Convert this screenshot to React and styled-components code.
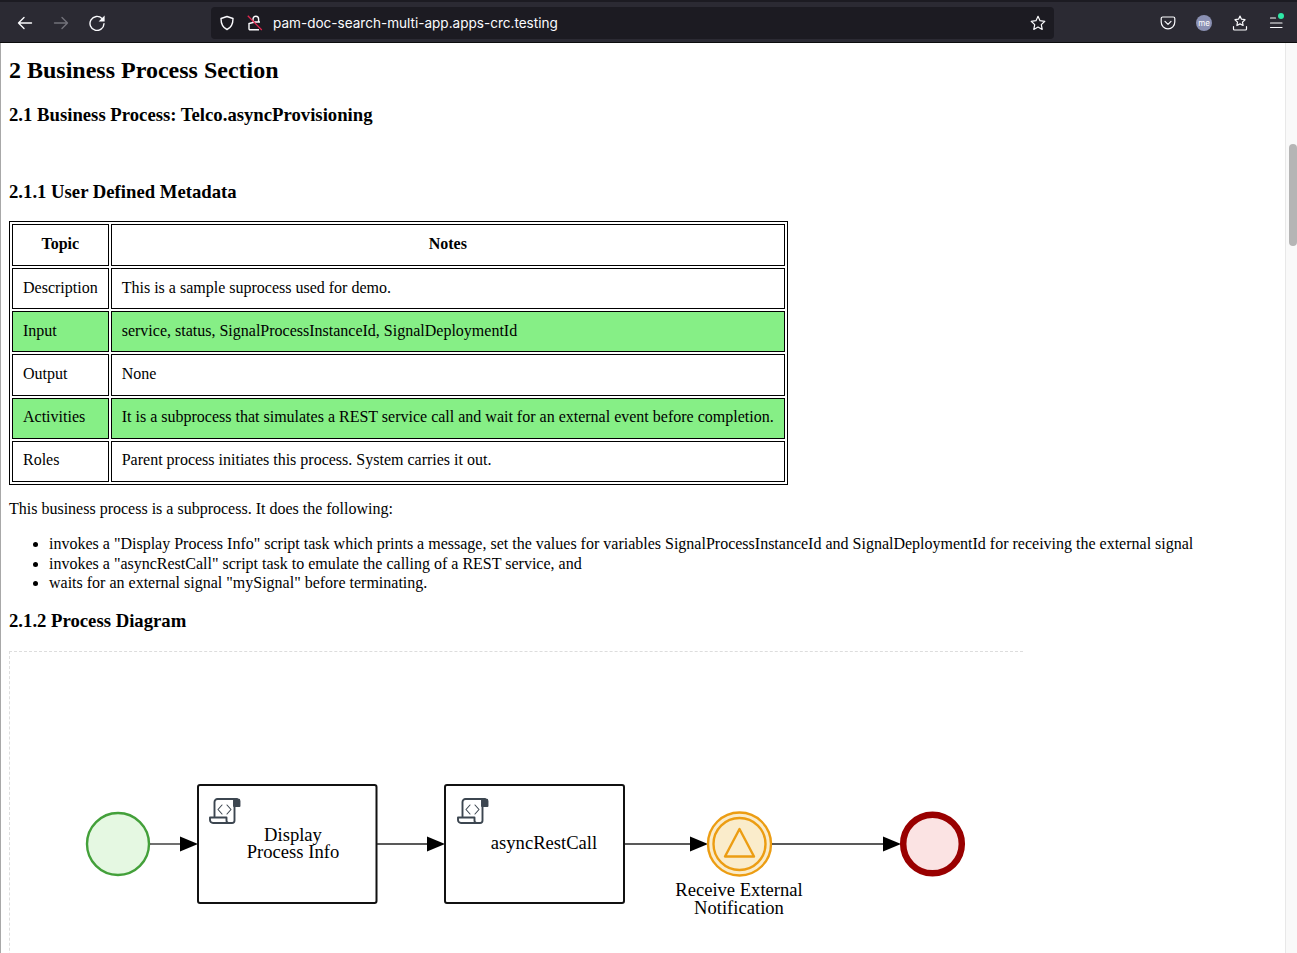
import React from "react";
import styled, { createGlobalStyle } from "styled-components";

const Global = createGlobalStyle`
  html, body { margin: 0; padding: 0; height: 953px; overflow: hidden; background: #fff; }
  #root { height: 953px; }
`;

const Window = styled.div`
  display: flex;
  flex-direction: column;
  height: 953px;
  overflow: hidden;
  font-family: "Liberation Serif", "Times New Roman", serif;
  color: #000;
`;

const Toolbar = styled.header`
  flex: none;
  height: 43px;
  box-sizing: border-box;
  display: flex;
  align-items: center;
  padding: 2px 0 0 17px;
  background: #2b2a33;
  border-top: 2px solid #1c1b22;
  border-bottom: 1px solid #0c0c0d;
`;

const NavIcons = styled.nav`
  display: flex;
  gap: 20px;
  width: 194px;
  flex: none;
`;

const UrlBar = styled.div`
  width: 843px;
  height: 32px;
  flex: none;
  display: flex;
  align-items: center;
  box-sizing: border-box;
  padding: 0 8px 0 8px;
  border-radius: 4px;
  background: #1c1b22;
`;

const LockIcon = styled.svg`
  flex: none;
  margin-left: 12px;
`;

const UrlText = styled.span`
  margin-left: 10px;
  padding-top: 2px;
  flex: 1;
  font: 400 13.55px/1 Inter, "Noto Sans", sans-serif;
  color: #fbfbfe;
`;

const RightIcons = styled.div`
  display: flex;
  align-items: center;
  margin-left: 106px;
  gap: 20px;
`;

const Avatar = styled.div`
  width: 16px;
  height: 16px;
  border-radius: 50%;
  background: #8a90b3;
  color: #fff;
  font: 400 8px/16px Inter, sans-serif;
  text-align: center;
`;

const MenuWrap = styled.div`
  position: relative;
  width: 16px;
  height: 16px;
`;

const Dot = styled.span`
  position: absolute;
  top: -2px;
  left: 10px;
  width: 6px;
  height: 6px;
  border-radius: 50%;
  background: #2ee8a6;
`;

const Viewport = styled.div`
  flex: 1;
  min-height: 0;
  display: flex;
  overflow: hidden;
`;

const Page = styled.main`
  flex: 1;
  min-width: 0;
  box-sizing: border-box;
  padding: 0 0 0 8px;
  border-left: 1px solid #a8a8a8;
  font-size: 16px;
  overflow: hidden;
`;

const Scrollbar = styled.aside`
  flex: none;
  width: 12px;
  box-sizing: border-box;
  padding: 101px 0 0 3px;
  background: #f9f9f9;
  border-left: 1px solid #e8e8e8;
`;

const Thumb = styled.div`
  width: 8px;
  height: 102px;
  border-radius: 4px;
  background: #b5b5b5;
`;

const H1 = styled.h1`
  margin: 12px 0 0;
  font-size: 24px;
  line-height: 30px;
  font-weight: 700;
`;

const H2 = styled.h2`
  margin: ${(p) => p.$top}px 0 0;
  font-size: 18.72px;
  line-height: 22px;
  font-weight: 700;
`;

const Table = styled.table`
  margin-top: 18px;
  width: 779px;
  box-sizing: border-box;
  border: 1px solid #000;
  border-spacing: 2px;
  border-collapse: separate;
`;

const Cell = styled.td`
  box-sizing: border-box;
  height: ${(p) => (p.$head ? 42 : 41.2)}px;
  padding: 0 10px 2px;
  border: 1px solid #000;
  background: ${(p) => (p.$hl ? "#86ef86" : "#fff")};
  font-weight: ${(p) => (p.$head ? 700 : 400)};
  text-align: ${(p) => (p.$head ? "center" : "left")};
  white-space: nowrap;
`;

const Para = styled.p`
  margin: 14px 0 0;
  line-height: 19px;
`;

const List = styled.ul`
  margin: 16.5px 0 0;
  padding-left: 40px;
  line-height: 19.5px;
`;

const DiagramBox = styled.section`
  margin-top: 19px;
  width: 1014px;
  height: 340px;
  box-sizing: border-box;
  border-top: 1px dashed #ddd;
  border-left: 1px dashed #ddd;
`;

const DiagramSvg = styled.svg`
  display: block;
  font-family: "Liberation Serif", "Times New Roman", serif;
  font-size: 18.6px;
  fill: #000;
`;

const Glyph = ({ children, color = "#fbfbfe", sw = 1.4 }) => (
  <svg width="16" height="16" viewBox="0 0 16 16" fill="none" stroke={color} strokeWidth={sw} strokeLinecap="round" strokeLinejoin="round">
    {children}
  </svg>
);

const ScriptIcon = ({ x }) => (
  <g transform={`translate(${x},798)`} fill="none" stroke="#3c4650" strokeWidth="1.9" strokeLinejoin="round" strokeLinecap="round">
    <path d="M5.500 18.500V4a3 3 0 0 1 3-3H28" />
    <path d="M25.500 4v18.500a2.500 2.500 0 0 1-2.500 2.500H4a3 3 0 0 1-3-3V19.500h16.500v3a2.500 2.500 0 0 0 2.500 2.500" />
    <path d="M25 1.500h4a1.500 1.500 0 0 1 1.500 1.500V8H25z" fill="#3c4650" />
    <path d="M13 7l-4 4.500 4 4.500M18 7l4 4.500-4 4.500" strokeWidth="1.100" />
  </g>
);

const Flow = ({ from, to }) => (
  <>
    <line x1={from} y1="844" x2={to - 16} y2="844" stroke="#222" strokeWidth="1.300" />
    <path d={`M${to - 18} 836.500L${to} 844L${to - 18} 851.500Z`} fill="#000" />
  </>
);

const Diagram = () => (
  <DiagramSvg width="1013" height="340" viewBox="10 652 1013 340">
    <circle cx="118" cy="844" r="31" fill="#e5f8e2" stroke="#43a03a" strokeWidth="2.400" />
    <Flow from={150} to={198} />
    <rect x="198" y="785" width="178.500" height="118" rx="2" fill="#fff" stroke="#111" strokeWidth="2" />
    <ScriptIcon x={209} />
    <text x="293" y="841" textAnchor="middle">Display</text>
    <text x="293" y="858" textAnchor="middle">Process Info</text>
    <Flow from={377} to={445} />
    <rect x="445" y="785" width="179" height="118" rx="2" fill="#fff" stroke="#111" strokeWidth="2" />
    <ScriptIcon x={457} />
    <text x="544" y="849" textAnchor="middle">asyncRestCall</text>
    <Flow from={625} to={708} />
    <circle cx="739.500" cy="844" r="31.500" fill="#faeccb" stroke="#ec9d13" strokeWidth="2.400" />
    <circle cx="739.500" cy="844" r="26" fill="none" stroke="#ec9d13" strokeWidth="2.400" />
    <path d="M739.500 829L725 856.500H754Z" fill="none" stroke="#ec9d13" strokeWidth="2.400" strokeLinejoin="round" />
    <Flow from={772} to={901} />
    <text x="739" y="896" textAnchor="middle">Receive External</text>
    <text x="739" y="914" textAnchor="middle">Notification</text>
    <circle cx="932.500" cy="844" r="29.300" fill="#fbe3e3" stroke="#990000" strokeWidth="6.500" />
  </DiagramSvg>
);

const rows = [
  ["Description", "This is a sample suprocess used for demo.", false],
  ["Input", "service, status, SignalProcessInstanceId, SignalDeploymentId", true],
  ["Output", "None", false],
  ["Activities", "It is a subprocess that simulates a REST service call and wait for an external event before completion.", true],
  ["Roles", "Parent process initiates this process. System carries it out.", false],
];

export default function App() {
  return (
    <Window>
      <Global />
      <Toolbar>
        <NavIcons>
          <Glyph><path d="M14.500 8H1.500M7 2.500L1.500 8 7 13.500" /></Glyph>
          <Glyph color="#72717a"><path d="M1.500 8h13M9 2.500L14.500 8 9 13.500" /></Glyph>
          <Glyph>
            <path d="M13 3.500A7 7 0 1 0 15 8.700" />
            <path d="M15.600 .5V6.500H9.600Z" fill="#fbfbfe" stroke="none" />
          </Glyph>
        </NavIcons>
        <UrlBar>
          <Glyph><path d="M8 1.500l6 2c0 5-1.500 9-6 11-4.500-2-6-6-6-11z" /></Glyph>
          <LockIcon width="16" height="16" viewBox="0 0 16 16" fill="none">
            <path d="M6 6.500V4a2.800 2.800 0 0 1 5.600 0V7" stroke="#fbfbfe" strokeWidth="1.400" />
            <path d="M12 14.800H3a1 1 0 0 1-1-1V8.500L8 7h5" stroke="#fbfbfe" strokeWidth="1.400" />
            <path d="M.8 .8L14.800 15" stroke="#e22850" strokeWidth="1.300" />
          </LockIcon>
          <UrlText>pam-doc-search-multi-app.apps-crc.testing</UrlText>
          <Glyph sw={1.2}><path d="M8 1.300l2 4.400 4.800.6-3.500 3.300.9 4.800L8 12l-4.200 2.400.9-4.800L1.200 6.300 6 5.700z" /></Glyph>
        </UrlBar>
        <RightIcons>
          <Glyph sw={1.2}><path d="M2.700 2h10.600a1.500 1.500 0 0 1 1.500 1.500V7a6.800 6.800 0 0 1-13.600 0V3.500A1.500 1.500 0 0 1 2.700 2zM5 6.300l3 3 3-3" /></Glyph>
          <Avatar>me</Avatar>
          <Glyph sw={1.2}><path d="M8 1l1.500 3.200 3.500.5-2.500 2.400.6 3.400L8 8.900l-3.100 1.600.6-3.400L3 4.700l3.500-.5zM1.500 11.500v2.500a1 1 0 0 0 1 1h11a1 1 0 0 0 1-1v-2.500" /></Glyph>
          <MenuWrap>
            <Glyph sw={1.2}><path d="M2.500 3h5M2.500 8h11.500M2.500 12.500h11.500" /></Glyph>
            <Dot />
          </MenuWrap>
        </RightIcons>
      </Toolbar>
      <Viewport>
        <Page>
          <H1>2 Business Process Section</H1>
          <H2 $top={19}>2.1 Business Process: Telco.asyncProvisioning</H2>
          <H2 $top={55}>2.1.1 User Defined Metadata</H2>
          <Table>
            <thead>
              <tr>
                <Cell as="th" $head>Topic</Cell>
                <Cell as="th" $head>Notes</Cell>
              </tr>
            </thead>
            <tbody>
              {rows.map(([topic, notes, hl]) => (
                <tr key={topic}>
                  <Cell $hl={hl}>{topic}</Cell>
                  <Cell $hl={hl}>{notes}</Cell>
                </tr>
              ))}
            </tbody>
          </Table>
          <Para>This business process is a subprocess. It does the following:</Para>
          <List>
            <li>invokes a "Display Process Info" script task which prints a message, set the values for variables SignalProcessInstanceId and SignalDeploymentId for receiving the external signal</li>
            <li>invokes a "asyncRestCall" script task to emulate the calling of a REST service, and</li>
            <li>waits for an external signal "mySignal" before terminating.</li>
          </List>
          <H2 $top={17.5}>2.1.2 Process Diagram</H2>
          <DiagramBox>
            <Diagram />
          </DiagramBox>
        </Page>
        <Scrollbar>
          <Thumb />
        </Scrollbar>
      </Viewport>
    </Window>
  );
}
